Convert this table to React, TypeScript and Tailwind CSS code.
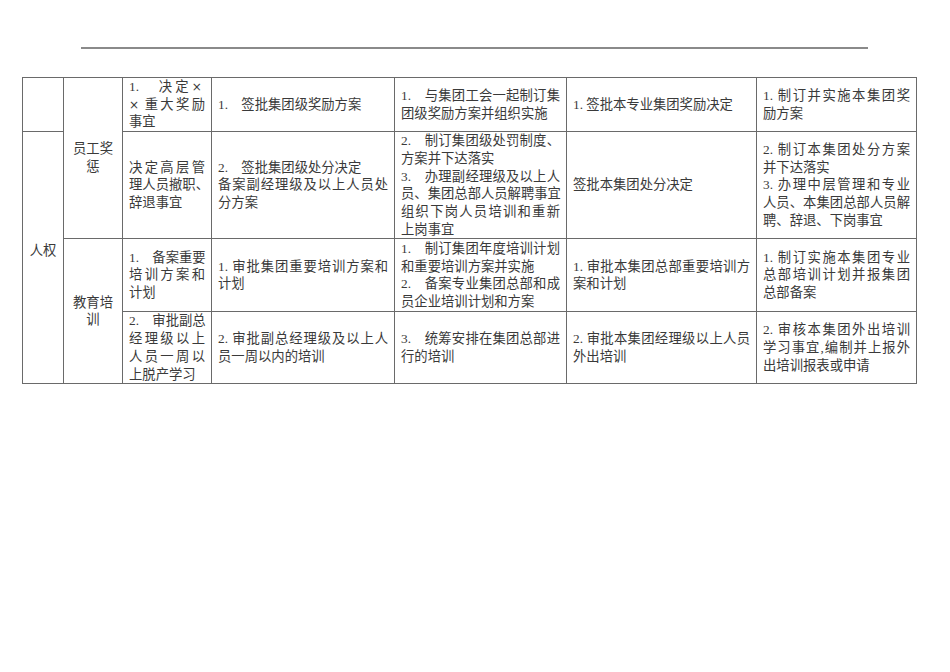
import React from "react";

type Line = React.ReactNode;
type Paras = Line[][];

const COLS = [41, 59, 89, 183, 172, 190, 160];

// full-width style multiplication sign, as in the Song font of the source
const X = () => (
  <span className="inline-block w-[13.33px] text-center align-baseline font-['DejaVu_Sans',sans-serif] text-[12px] leading-none">
    ×
  </span>
);

function Lines({ paras, justify }: { paras: Paras; justify: boolean }) {
  return (
    <>
      {paras.map((p, i) =>
        p.map((line, j) => (
          <div
            key={`${i}-${j}`}
            className={
              justify && j < p.length - 1
                ? "whitespace-nowrap text-justify [text-align-last:justify]"
                : "whitespace-nowrap"
            }
          >
            {line}
          </div>
        ))
      )}
    </>
  );
}

function Cell({
  paras,
  rowSpan,
  center,
  className = "",
}: {
  paras?: Paras;
  rowSpan?: number;
  center?: boolean;
  className?: string;
}) {
  return (
    <td
      rowSpan={rowSpan}
      className={`border border-[#6a6a6a] px-[6px] py-0 align-middle ${
        center ? "text-center" : "text-left"
      } ${className}`}
    >
      {paras && <Lines paras={paras} justify={!center} />}
    </td>
  );
}

export default function App() {
  return (
    <div className="min-h-[672px] w-[950px] bg-white pt-[47px] font-['Liberation_Serif','Noto_Sans_CJK_SC',serif] text-[13.33px] leading-[17.7px] text-[#3a3a3a]">
      {/* header rule */}
      <div className="ml-[81px] h-[2px] w-[787px] bg-[#8a8a8a]" />

      <table className="ml-[22px] mt-[28px] w-[895px] table-fixed border-collapse">
        <colgroup>
          {COLS.map((w, i) => (
            <col key={i} style={{ width: w }} />
          ))}
        </colgroup>
        <tbody>
          {/* 员工奖惩 - 奖励 */}
          <tr className="h-[54px]">
            <Cell />
            <Cell rowSpan={2} center paras={[["员工奖", "惩"]]} />
            <Cell
              paras={[
                [
                  <>
                    1.　决定<X />
                  </>,
                  <>
                    <X />重大奖励
                  </>,
                  "事宜",
                ],
              ]}
            />
            <Cell paras={[["1.　签批集团级奖励方案"]]} />
            <Cell paras={[["1.　与集团工会一起制订集", "团级奖励方案并组织实施"]]} />
            <Cell paras={[["1. 签批本专业集团奖励决定"]]} />
            <Cell paras={[["1. 制订并实施本集团奖", "励方案"]]} />
          </tr>

          {/* 员工奖惩 - 处分 */}
          <tr className="h-[107px]">
            <Cell rowSpan={3} center paras={[["人权"]]} className="pb-[14px]" />
            <Cell paras={[["决定高层管", "理人员撤职、", "辞退事宜"]]} />
            <Cell
              paras={[
                ["2.　签批集团级处分决定"],
                ["备案副经理级及以上人员处", "分方案"],
              ]}
            />
            <Cell
              paras={[
                ["2.　制订集团级处罚制度、", "方案并下达落实"],
                ["3.　办理副经理级及以上人", "员、集团总部人员解聘事宜"],
                ["组织下岗人员培训和重新", "上岗事宜"],
              ]}
            />
            <Cell paras={[["签批本集团处分决定"]]} />
            <Cell
              paras={[
                ["2. 制订本集团处分方案", "并下达落实"],
                ["3. 办理中层管理和专业", "人员、本集团总部人员解", "聘、辞退、下岗事宜"],
              ]}
            />
          </tr>

          {/* 教育培训 */}
          <tr className="h-[73px]">
            <Cell rowSpan={2} center paras={[["教育培", "训"]]} />
            <Cell paras={[["1.　备案重要", "培训方案和", "计划"]]} />
            <Cell paras={[["1. 审批集团重要培训方案和", "计划"]]} />
            <Cell
              paras={[
                ["1.　制订集团年度培训计划", "和重要培训方案并实施"],
                ["2.　备案专业集团总部和成", "员企业培训计划和方案"],
              ]}
            />
            <Cell paras={[["1. 审批本集团总部重要培训方", "案和计划"]]} />
            <Cell paras={[["1. 制订实施本集团专业", "总部培训计划并报集团", "总部备案"]]} />
          </tr>

          <tr className="h-[72px]">
            <Cell paras={[["2.　审批副总", "经理级以上", "人员一周以", "上脱产学习"]]} />
            <Cell paras={[["2. 审批副总经理级及以上人", "员一周以内的培训"]]} />
            <Cell paras={[["3.　统筹安排在集团总部进", "行的培训"]]} />
            <Cell paras={[["2. 审批本集团经理级以上人员", "外出培训"]]} />
            <Cell paras={[["2. 审核本集团外出培训", "学习事宜,编制并上报外", "出培训报表或申请"]]} />
          </tr>
        </tbody>
      </table>
    </div>
  );
}
